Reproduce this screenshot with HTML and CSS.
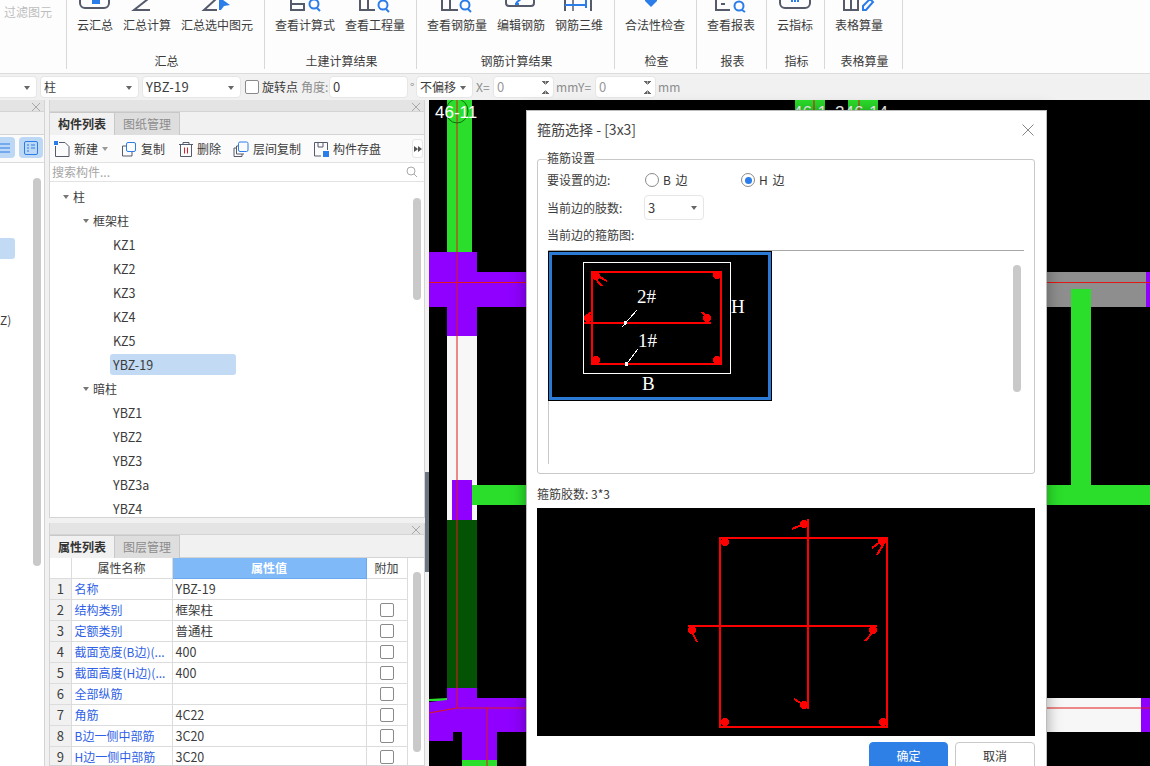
FILE: index.html
```html
<!DOCTYPE html>
<html lang="zh-CN">
<head>
<meta charset="utf-8">
<title>箍筋选择</title>
<link rel="stylesheet" href="styles.css">
</head>
<body>
<div class="app">
  <header class="ribbon">
    <div class="filter-cell">过滤图元</div>

    <section class="group g-sum">
      <div class="items">
        <div class="item">
          <svg class="ri" width="36" height="14" viewBox="77 0 36 14"><rect class="st" x="80" y="-12" width="29" height="20" rx="5"/><path class="bl" d="M92 1h8M92 3h8" /></svg>
          <span>云汇总</span>
        </div>
        <div class="item">
          <svg class="ri" width="48" height="14" viewBox="123 0 48 14"><path class="st" d="M148 -1 134 10H150"/></svg>
          <span>汇总计算</span>
        </div>
        <div class="item">
          <svg class="ri" width="72" height="14" viewBox="181 0 72 14"><path class="st" d="M216 -1 204 10H217"/><path class="blf" d="M219 -3 230 5 224 6 221 10 219 10Z"/></svg>
          <span>汇总选中图元</span>
        </div>
      </div>
      <div class="glabel">汇总</div>
    </section>

    <section class="group g-civil">
      <div class="items">
        <div class="item">
          <svg class="ri" width="60" height="14" viewBox="275 0 60 14"><path class="st" d="M291 -2V10H304V4H291"/><circle class="bs" cx="314" cy="4" r="4.5"/><path class="bs" d="M317 8l3 3"/></svg>
          <span>查看计算式</span>
        </div>
        <div class="item">
          <svg class="ri" width="60" height="14" viewBox="345 0 60 14"><path class="st" d="M360 -2V10H375M368 -2V10"/><circle class="bs" cx="383" cy="5" r="4.5"/><path class="bs" d="M386 9l3 3"/></svg>
          <span>查看工程量</span>
        </div>
      </div>
      <div class="glabel">土建计算结果</div>
    </section>

    <section class="group g-steel">
      <div class="items">
        <div class="item">
          <svg class="ri" width="60" height="14" viewBox="427 0 60 14"><path class="st" d="M442 -2V10H458M450 -2V10"/><circle class="bs" cx="465" cy="5" r="4.5"/><path class="bs" d="M468 9l3 3"/></svg>
          <span>查看钢筋量</span>
        </div>
        <div class="item">
          <svg class="ri" width="48" height="14" viewBox="497 0 48 14"><path class="st" d="M506 0V3Q506 6 509 6H531Q534 6 534 3V0"/><path class="bs" d="M516 3 522 -2M515 4h4"/></svg>
          <span>编辑钢筋</span>
        </div>
        <div class="item">
          <svg class="ri" width="48" height="14" viewBox="555 0 48 14"><path class="st" d="M565 -2V11M591 -2V11"/><path class="st thin" d="M573 -2V11"/><path class="bs" d="M565 5H587M586 -1V8"/></svg>
          <span>钢筋三维</span>
        </div>
      </div>
      <div class="glabel">钢筋计算结果</div>
    </section>

    <section class="group g-check">
      <div class="items">
        <div class="item">
          <svg class="ri" width="60" height="14" viewBox="625 0 60 14"><path class="blf" d="M645 -2H657V1L651 7 645 1Z"/></svg>
          <span>合法性检查</span>
        </div>
      </div>
      <div class="glabel">检查</div>
    </section>

    <section class="group g-report">
      <div class="items">
        <div class="item">
          <svg class="ri" width="48" height="14" viewBox="707 0 48 14"><path class="st" d="M716 -2V10H730M721 4h4"/><circle class="bs" cx="739" cy="6" r="4.5"/><path class="bs" d="M742 10l3 2"/></svg>
          <span>查看报表</span>
        </div>
      </div>
      <div class="glabel">报表</div>
    </section>

    <section class="group g-index">
      <div class="items">
        <div class="item">
          <svg class="ri" width="36" height="14" viewBox="777 0 36 14"><rect class="st" x="780" y="-12" width="30" height="20" rx="5"/><path class="bs" d="M792 0v2M795 0v2M798 0v2"/></svg>
          <span>云指标</span>
        </div>
      </div>
      <div class="glabel">指标</div>
    </section>

    <section class="group g-table">
      <div class="items">
        <div class="item">
          <svg class="ri" width="48" height="14" viewBox="835 0 48 14"><path class="st" d="M844 -2V10H858M851 -2V10H858V-2"/><path class="bs thin" d="M863 10V6L870 -1 873 2 866 10Z"/></svg>
          <span>表格算量</span>
        </div>
      </div>
      <div class="glabel">表格算量</div>
    </section>
  </header>

  <div class="toolbar">
    <div class="combo w-first"><i class="caret"></i></div>
    <div class="combo w-combo"><span>柱</span><i class="caret"></i></div>
    <div class="combo w-combo"><span class="latin">YBZ-19</span><i class="caret"></i></div>
    <span class="check tb-check"></span>
    <span class="tb-text">旋转点</span>
    <span class="tb-muted lab-angle">角度:</span>
    <div class="field w-angle"><span class="latin">0</span></div>
    <span class="tb-muted deg">°</span>
    <div class="combo w-offset"><span>不偏移</span><i class="caret"></i></div>
    <span class="tb-muted lab-xy">X=</span>
    <div class="field w-num"><span class="latin dim">0</span><i class="spin"></i></div>
    <span class="tb-muted lab-mm">mm</span>
    <span class="tb-muted lab-xy">Y=</span>
    <div class="field w-num"><span class="latin dim">0</span><i class="spin"></i></div>
    <span class="tb-muted lab-mm">mm</span>
  </div>

  <main class="main">
    <aside class="side">
      <div class="pane-narrow">
        <div class="pane-head"><svg class="x" width="8" height="8" viewBox="0 0 8 8"><path d="M0 0 8 8M8 0 0 8"/></svg></div>
        <div class="tabs"></div>
        <div class="narrow-tools">
          <span class="pill pill-a"><svg width="15" height="14" viewBox="0 0 15 14"><path class="bs1" d="M0 3H10M0 7H10M0 11H10"/></svg></span>
          <span class="pill pill-b"><svg width="16" height="16" viewBox="0 0 16 16"><rect class="bs1" x="1.500" y="1.500" width="13" height="13" rx="1.500"/><path class="bs1" d="M4 5H6M8 5H12M4 8H6M8 8H12M4 11H6"/></svg></span>
        </div>
        <div class="narrow-list">
          <div class="narrow-sel"></div>
          <div class="narrow-text">Z)</div>
          <div class="narrow-scroll"></div>
        </div>
      </div>

      <div class="pane-stack">
        <section class="pane pane-top">
          <div class="pane-head"><svg class="x" width="8" height="8" viewBox="0 0 8 8"><path d="M0 0 8 8M8 0 0 8"/></svg></div>
          <div class="tabs">
            <span class="tab active">构件列表</span>
            <span class="tab">图纸管理</span>
          </div>
          <div class="comp-tools">
            <span class="tool t-new"><svg width="16" height="16" viewBox="0 0 16 16"><path class="ds" d="M5 1.500H11L15 5.500V15.500H1.500V5"/><rect class="blf" x="0" y="0" width="4" height="4"/></svg>新建<i class="caret small"></i></span>
            <span class="tool t-copy"><svg width="16" height="16" viewBox="0 0 16 16"><path class="ds" d="M5 5H1.500V15H11V11"/><rect class="bs1" x="5.500" y="1.500" width="9" height="9" rx="1.500"/></svg>复制</span>
            <span class="tool t-del"><svg width="16" height="16" viewBox="0 0 16 16"><path class="ds" d="M1 3.500H15M5 3.500V1.500H11V3.500M2.500 3.500V15.500H13.500V3.500"/><path class="rs" d="M6.500 6.500V12.500M9.500 6.500V12.500"/></svg>删除</span>
            <span class="tool t-floor"><svg width="16" height="16" viewBox="0 0 16 16"><path class="ds" d="M5 5H3.500V13H11M3 7H1V15.500H9V13"/><rect class="bs1" x="5.500" y="1" width="9.500" height="9.500" rx="1.500"/></svg>层间复制</span>
            <span class="tool t-save"><svg width="16" height="16" viewBox="0 0 16 16"><path class="ds" d="M1.500 1.500H14.500V9M8 15H1.500V1.500M5 1.500V6H10V1.500"/><rect class="blf" x="10" y="10" width="6" height="6"/></svg>构件存盘</span>
            <span class="more"><svg width="8" height="6" viewBox="0 0 8 6"><path d="M0 0 4 3 0 6ZM4 0 8 3 4 6Z"/></svg></span>
          </div>
          <div class="search">
            <span>搜索构件...</span>
            <svg width="12" height="12" viewBox="0 0 12 12"><circle cx="5" cy="5" r="4"/><path d="M8 8l3 3"/></svg>
          </div>
          <div class="tree">
            <div class="node n0"><i class="caret tree-caret"></i>柱</div>
            <div class="node n1"><i class="caret tree-caret"></i>框架柱</div>
            <div class="node n2">KZ1</div>
            <div class="node n2">KZ2</div>
            <div class="node n2">KZ3</div>
            <div class="node n2">KZ4</div>
            <div class="node n2">KZ5</div>
            <div class="node n2 selected"><span>YBZ-19</span></div>
            <div class="node n1"><i class="caret tree-caret"></i>暗柱</div>
            <div class="node n2">YBZ1</div>
            <div class="node n2">YBZ2</div>
            <div class="node n2">YBZ3</div>
            <div class="node n2">YBZ3a</div>
            <div class="node n2">YBZ4</div>
            <div class="tree-scroll"></div>
          </div>
        </section>

        <section class="pane pane-bottom">
          <div class="pane-head"><svg class="x" width="8" height="8" viewBox="0 0 8 8"><path d="M0 0 8 8M8 0 0 8"/></svg></div>
          <div class="tabs">
            <span class="tab active">属性列表</span>
            <span class="tab">图层管理</span>
          </div>
          <div class="table-wrap">
            <table class="props">
              <colgroup><col class="c-num"><col class="c-name"><col class="c-val"><col class="c-add"></colgroup>
              <thead>
                <tr><th class="corner"></th><th>属性名称</th><th class="val-head">属性值</th><th>附加</th></tr>
              </thead>
              <tbody>
                <tr><td class="num">1</td><td class="name">名称</td><td class="val">YBZ-19</td><td></td></tr>
                <tr><td class="num">2</td><td class="name">结构类别</td><td class="val">框架柱</td><td class="add"><span class="check"></span></td></tr>
                <tr><td class="num">3</td><td class="name">定额类别</td><td class="val">普通柱</td><td class="add"><span class="check"></span></td></tr>
                <tr><td class="num">4</td><td class="name">截面宽度(B边)(...</td><td class="val">400</td><td class="add"><span class="check"></span></td></tr>
                <tr><td class="num">5</td><td class="name">截面高度(H边)(...</td><td class="val">400</td><td class="add"><span class="check"></span></td></tr>
                <tr><td class="num">6</td><td class="name">全部纵筋</td><td class="val"></td><td class="add"><span class="check"></span></td></tr>
                <tr><td class="num">7</td><td class="name">角筋</td><td class="val">4C22</td><td class="add"><span class="check"></span></td></tr>
                <tr><td class="num">8</td><td class="name">B边一侧中部筋</td><td class="val">3C20</td><td class="add"><span class="check"></span></td></tr>
                <tr><td class="num">9</td><td class="name">H边一侧中部筋</td><td class="val">3C20</td><td class="add"><span class="check"></span></td></tr>
              </tbody>
            </table>
            <div class="table-scroll"></div>
          </div>
        </section>
      </div>

      <div class="splitter"><div class="split-grip"></div></div>
    </aside>

    <div class="canvas">
      <svg class="cad" width="721" height="666" viewBox="429 100 721 666">
        <rect x="429" y="100" width="721" height="666" fill="#000"/>
        <!-- top labels behind dialog -->
        <rect x="795" y="100" width="30" height="14" fill="#2bde2b"/>
        <rect x="848" y="100" width="30" height="14" fill="#2bde2b"/>
        <path d="M814 100V114M859 100V114" stroke="#e01818" stroke-width="1"/>
        <text class="axis" x="793" y="118">46-1</text>
        <text class="axis" x="835" y="118">246-14</text>
        <!-- left column -->
        <rect x="447" y="100" width="25" height="152" fill="#2bde2b"/>
        <rect x="429" y="252" width="48" height="55" fill="#8f00ff"/>
        <rect x="477" y="272" width="50" height="35" fill="#8f00ff"/>
        <rect x="447" y="307" width="30" height="29" fill="#8f00ff"/>
        <rect x="447" y="336" width="30" height="184" fill="#f7f7f7"/>
        <rect x="452" y="480" width="20" height="40" fill="#8f00ff"/>
        <rect x="472" y="485" width="55" height="20" fill="#2bde2b"/>
        <rect x="447" y="520" width="30" height="169" fill="#045204"/>
        <path d="M429 699 447 698V701H429Z" fill="#2bde2b"/>
        <path d="M447 688H477V698H527V732H497V760H462V732H453V741H429V702L447 700Z" fill="#8f00ff"/>
        <rect x="462" y="760" width="35" height="6" fill="#2bde2b"/>
        <path d="M457 100V708M429 282.500H527M457 708H527M429 713 457 708M487 708V766" stroke="#e01818" stroke-width="1" fill="none"/>
        <ellipse cx="457" cy="111" rx="11" ry="12" fill="none" stroke="#0a6e0a"/>
        <text class="axis" x="435" y="118">46-11</text>
        <!-- right side -->
        <rect x="1047" y="272" width="99" height="35" fill="#8e8e8e"/>
        <rect x="1146" y="272" width="4" height="35" fill="#8f00ff"/>
        <path d="M1047 282.500H1150" stroke="#e01818"/>
        <rect x="1071" y="289" width="20" height="196" fill="#2bde2b"/>
        <rect x="1047" y="485" width="103" height="20" fill="#2bde2b"/>
        <rect x="1047" y="698" width="94" height="34" fill="#f7f7f7"/>
        <rect x="1141" y="698" width="9" height="34" fill="#8f00ff"/>
        <path d="M1047 708H1150" stroke="#e01818"/>
      </svg>
    </div>
  </main>

  <div class="dialog">
    <div class="dlg-title">
      <span>箍筋选择 - [3x3]</span>
      <svg class="dlg-x" width="12" height="12" viewBox="0 0 12 12"><path d="M.5.5l11 11M11.500.5l-11 11"/></svg>
    </div>
    <fieldset class="settings">
      <legend>箍筋设置</legend>
      <div class="row r-side">
        <span class="row-label">要设置的边:</span>
        <span class="radio-opt"><i class="radio"></i>B 边</span>
        <span class="radio-opt"><i class="radio on"></i>H 边</span>
      </div>
      <div class="row r-count">
        <span class="row-label">当前边的肢数:</span>
        <div class="combo w-count"><span class="latin">3</span><i class="caret"></i></div>
      </div>
      <div class="row r-fig"><span>当前边的箍筋图:</span></div>
      <div class="thumb-list">
        <svg class="thumb" width="224" height="150" viewBox="548 251 224 150">
          <rect x="548" y="251" width="224" height="150" fill="#000"/>
          <rect x="550.500" y="253.500" width="219" height="145" fill="none" stroke="#2b7ad6" stroke-width="3"/>
          <rect x="583.500" y="262.500" width="147" height="111" fill="none" stroke="#fff"/>
          <rect x="592" y="272" width="129" height="92" fill="none" stroke="#f00" stroke-width="2"/>
          <path d="M584 322.700H711" stroke="#f00" stroke-width="2"/>
          <g fill="#f00">
            <circle cx="596" cy="276" r="4"/><circle cx="717" cy="275" r="4"/>
            <circle cx="596" cy="360" r="4"/><circle cx="717" cy="360" r="4"/>
            <circle cx="588" cy="318" r="4"/><circle cx="707" cy="318" r="4"/>
          </g>
          <path d="M594 274 607 281M593 276 602 286M588 318 590 312M707 318 702 312" stroke="#f00" stroke-width="2" fill="none"/>
          <path d="M637 310 622 327M638 349 625 366" stroke="#fff"/>
          <circle cx="625.500" cy="322.700" r="2" fill="#fff"/>
          <circle cx="626.500" cy="364" r="2" fill="#fff"/>
          <text class="fig" x="637" y="303">2#</text>
          <text class="fig" x="638" y="347">1#</text>
          <text class="fig" x="731" y="313">H</text>
          <text class="fig" x="642" y="390">B</text>
        </svg>
        <div class="thumb-scroll"></div>
      </div>
    </fieldset>
    <div class="legs">箍筋胶数: 3*3</div>
    <div class="preview">
      <svg width="498" height="228" viewBox="537 508 498 228">
        <rect x="720" y="538" width="167" height="189" fill="none" stroke="#f00" stroke-width="2"/>
        <path d="M688 626H877M808 519V709" stroke="#f00" stroke-width="2" fill="none"/>
        <g fill="#f00">
          <circle cx="725" cy="542" r="4"/><circle cx="882" cy="541" r="4"/>
          <circle cx="725" cy="722" r="4"/><circle cx="883" cy="722" r="4"/>
          <circle cx="692" cy="630" r="4"/><circle cx="873" cy="630" r="4"/>
          <circle cx="804" cy="524" r="4"/><circle cx="804" cy="705" r="4"/>
        </g>
        <path d="M804 524 792 529M883 540 872 548M884 543 877 555M692 632 697 642M873 632 865 641M804 705 794 699" stroke="#f00" stroke-width="2" fill="none"/>
      </svg>
    </div>
    <div class="buttons">
      <button class="btn primary">确定</button>
      <button class="btn">取消</button>
    </div>
  </div>
</div>
</body>
</html>
```
FILE: styles.css
```css
* { box-sizing: border-box; }
html, body { margin: 0; padding: 0; height: 100%; }
body {
  font: 12px/16px "Noto Sans CJK SC", "Noto Sans", sans-serif;
  color: #3c3c3c;
  background: #fff;
  overflow: hidden;
}
.app {
  position: relative;
  width: 1150px;
  height: 766px;
  overflow: hidden;
  display: flex;
  flex-direction: column;
}

/* ribbon */
.ribbon { height: 73px; display: flex; background: #fdfdfd; flex: none; }
.filter-cell { width: 67px; height: 69px; padding: 4px 0 0 4px; color: #bdbdbd; border-right: 1px solid #d8d8d8; }
.group {
  height: 69px;
  display: flex;
  flex-direction: column;
  justify-content: space-between;
  border-right: 1px solid #d8d8d8;
}
.items { display: flex; gap: 10px; padding-left: 10px; }
.item { display: flex; flex-direction: column; }
.item span { margin-top: 3px; white-space: nowrap; }
.ri { display: block; overflow: hidden; }
.glabel { text-align: center; padding-left: 2px; }
.g-sum { width: 198px; }
.g-civil { width: 152px; }
.g-steel { width: 198px; }
.g-check { width: 82px; }
.g-report { width: 70px; }
.g-index { width: 58px; }
.g-table { width: 78px; }
.st { fill: none; stroke: #555b6b; stroke-width: 2; }
.thin { stroke-width: 1.500; }
.bl, .bs { fill: none; stroke: #2b7de9; stroke-width: 2; }
.blf { fill: #2b7de9; }
.bs1 { fill: none; stroke: #2b7de9; stroke-width: 1; }
.ds { fill: none; stroke: #555b6b; stroke-width: 1; }
.rs { fill: none; stroke: #d8202a; stroke-width: 1; }

/* top options bar */
.toolbar {
  height: 27px;
  flex: none;
  display: flex;
  align-items: center;
  gap: 3px;
  background: #f1f1f1;
  border-top: 1px solid #dcdcdc;
}
.combo, .field {
  height: 22px;
  display: flex;
  align-items: center;
  background: #fff;
  border: 1px solid #e6e6e6;
  border-radius: 4px;
  padding: 0 3px;
  flex: none;
  position: relative;
}
.w-first { width: 37px; border-left: 0; border-radius: 0 4px 4px 0; }
.w-combo { width: 99px; }
.w-angle { width: 79px; }
.w-offset { width: 57px; }
.w-num { width: 61px; }
.latin { font-size: 13px; letter-spacing: .2px; }
.dim { color: #999; }
.caret {
  position: absolute;
  right: 6px;
  top: 9px;
  width: 0;
  height: 0;
  border: 3.500px solid transparent;
  border-top: 4px solid #666;
  border-bottom: 0;
}
.spin {
  position: absolute;
  right: 4px;
  top: 4px;
  width: 7px;
  height: 13px;
  background:
    linear-gradient(to top right, transparent 50%, #666 50%) 0 0 / 50% 4px no-repeat,
    linear-gradient(to top left, transparent 50%, #666 50%) 100% 0 / 50% 4px no-repeat,
    linear-gradient(to bottom right, transparent 50%, #666 50%) 0 100% / 50% 4px no-repeat,
    linear-gradient(to bottom left, transparent 50%, #666 50%) 100% 100% / 50% 4px no-repeat;
}
.check {
  display: inline-block;
  width: 14px;
  height: 14px;
  background: #fff;
  border: 1px solid #8a8a8a;
  border-radius: 2px;
  flex: none;
}
.tb-check { margin-left: 1px; }
.tb-muted { color: #8c8c8c; white-space: nowrap; }
.tb-text { white-space: nowrap; }
.lab-angle { width: 26px; margin-right: -1px; overflow: visible; }
.deg { width: 5px; margin-left: -1px; margin-right: -2px; }
.lab-xy { width: 14px; }
.lab-mm { width: 19px; margin-left: -1px; }

/* main */
.main { flex: 1; display: flex; min-height: 0; }
.side { width: 429px; flex: none; display: flex; background: #f1f1f1; }
.pane-narrow { width: 45px; flex: none; display: flex; flex-direction: column; border-right: 1px solid #d4d4d4; background: #fff; }
.pane-head {
  height: 12px;
  flex: none;
  background: #e4e4e4;
  border-bottom: 1px solid #d4d4d4;
  display: flex;
  justify-content: flex-end;
  padding: 3px 4px 0 0;
}
.x { stroke: #a8a8a8; stroke-width: 1; fill: none; display: block; }
.tabs { height: 23px; flex: none; background: #f1f1f1; border-bottom: 1px solid #d4d4d4; display: flex; padding-left: 0; }
.tab {
  width: 65px;
  height: 23px;
  line-height: 21px;
  text-align: center;
  font-size: 12px;
  color: #8c8c8c;
  background: #dedede;
  border: 1px solid #c8c8c8;
  border-bottom: 0;
  border-left: 0;
}
.tab.active { color: #333; background: #f1f1f1; font-weight: 700; }
.narrow-tools { height: 28px; flex: none; display: flex; gap: 4px; padding-top: 2px; border-bottom: 1px solid #dcdcdc; background: #fbfbfb; }
.pill { height: 21px; border-radius: 4px; background: #bcd8f5; display: flex; align-items: center; }
.pill-a { width: 15px; border-radius: 0 4px 4px 0; }
.pill-b { width: 24px; justify-content: center; }
.narrow-list { flex: 1; position: relative; }
.narrow-sel { width: 15px; height: 21px; margin-top: 75px; background: #c2daf3; border-radius: 0 3px 3px 0; }
.narrow-text { margin-top: 53px; }
.narrow-scroll { position: absolute; left: 33px; top: 15px; width: 8px; height: 388px; background: #c9c9c9; border-radius: 4px; }

.pane-stack { width: 376px; margin-left: 4px; flex: none; display: flex; flex-direction: column; gap: 5px; }
.pane { background: #fff; border: solid #d4d4d4; border-width: 0 1px 1px; display: flex; flex-direction: column; }
.pane-top { height: 418px; flex: none; }
.pane-bottom { flex: 1; min-height: 0; }

.comp-tools {
  height: 28px;
  flex: none;
  display: flex;
  align-items: center;
  position: relative;
  background: #fbfbfb;
  border-bottom: 1px solid #e2e2e2;
  padding-left: 4px;
}
.tool { display: flex; align-items: center; gap: 4px; white-space: nowrap; position: relative; }
.tool svg { flex: none; }
.t-new { width: 67px; }
.t-copy { width: 57px; }
.t-del { width: 55px; }
.t-del svg { margin-right: -1px; }
.t-floor { width: 80px; }
.caret.small { right: 13px; top: 6px; border-top-color: #999; }
.more {
  position: absolute;
  left: 362px;
  top: 4px;
  width: 11px;
  height: 19px;
  display: flex;
  align-items: center;
  justify-content: center;
  fill: #555;
  background: #fff;
  border: 1px solid #e6e6e6;
  border-radius: 3px;
}
.search {
  height: 19px;
  flex: none;
  display: flex;
  align-items: center;
  justify-content: space-between;
  padding: 0 6px 0 2px;
  color: #a6a6a6;
  border-bottom: 1px solid #e2e2e2;
}
.search svg { fill: none; stroke: #a8a8a8; stroke-width: 1; }
.tree { flex: 1; position: relative; padding-top: 3px; overflow: hidden; font-size: 12px; }
.node { height: 24px; line-height: 24px; position: relative; white-space: nowrap; }
.n0 { padding-left: 23px; }
.n1 { padding-left: 43px; }
.n2 { padding-left: 63px; font-size: 12.500px; }
.tree-caret { left: 13px; right: auto; top: 10px; border-top-color: #777; }
.n1 .tree-caret { left: 33px; }
.selected { padding-left: 60px; }
.selected span { display: block; width: 126px; height: 21px; line-height: 21px; margin-top: 0; padding-left: 3px; position: relative; top: 1px; background: #c2daf3; border-radius: 3px; }
.tree-scroll { position: absolute; left: 363px; top: 16px; width: 8px; height: 102px; background: #c9c9c9; border-radius: 4px; }

.table-wrap { flex: 1; position: relative; overflow: hidden; }
.props { border-collapse: collapse; table-layout: fixed; width: 357px; }
.c-num { width: 21px; }
.c-name { width: 101px; }
.c-val { width: 194px; }
.c-add { width: 41px; }
.props th, .props td {
  height: 21px;
  padding: 0;
  border: 1px solid #dcdcdc;
  font-weight: 400;
  white-space: nowrap;
  overflow: hidden;
}
.props th { height: 20px; text-align: center; border-top: 0; background: #fff; }
.props tr > :first-child { border-left: 0; }
.props .val-head { background: #7fb9f8; color: #fff; font-weight: 700; border-color: #6aa9ee; }
.props .num { background: #f1f1f1; text-align: center; font-size: 13px; }
.props .name { color: #2f5fe6; padding-left: 3px; }
.props .val { padding-left: 3px; font-size: 12.500px; }
.props .add { text-align: center; line-height: 0; }
.table-scroll { position: absolute; left: 363px; top: 14px; width: 8px; height: 180px; background: #c9c9c9; border-radius: 4px; }

.splitter { width: 4px; flex: none; }
.split-grip { width: 4px; height: 100px; margin-top: 372px; background: #6c7680; }

/* canvas */
.canvas { flex: 1; overflow: hidden; background: #000; }
.cad { display: block; }
.axis { font: 17px "Liberation Sans", sans-serif; fill: #fff; }

/* dialog */
.dialog {
  position: absolute;
  left: 526px;
  top: 110px;
  width: 521px;
  height: 680px;
  padding: 0 11px 0 10px;
  background: #fff;
  border: 1px solid #bdbdbd;
  box-shadow: 0 0 14px rgba(0, 0, 0, .35);
}
.dlg-title { height: 39px; padding-top: 10px; display: flex; justify-content: space-between; font-size: 14px; color: #444; }
.dlg-x { margin: 3px 1px 0 0; stroke: #888; fill: none; stroke-width: 1; }
.settings {
  height: 324px;
  margin: 0;
  padding: 4px 10px 0 9px;
  border: 1px solid #c8c8c8;
  border-radius: 3px;
  min-width: 0;
}
.settings legend { padding: 0 0 2px; margin-left: 0; line-height: 16px; }
.row { display: flex; align-items: center; }
.row-label { width: 97px; flex: none; }
.r-side { height: 16px; }
.r-count { height: 25px; margin-top: 7px; }
.r-fig { height: 16px; margin-top: 7px; }
.radio-opt { display: flex; align-items: center; gap: 4px; width: 96px; white-space: nowrap; color: #333; word-spacing: 2px; }
.radio {
  width: 14px;
  height: 14px;
  border: 1px solid #8a8a8a;
  border-radius: 50%;
  display: flex;
  align-items: center;
  justify-content: center;
  margin-left: 1px;
  background: #fff;
}
.radio.on::after { content: ""; width: 7px; height: 7px; border-radius: 50%; background: #2b7de9; }
.w-count { width: 60px; height: 25px; padding-left: 3px; }
.w-count .caret { top: 10px; }
.thumb-list { height: 214px; margin: 7px 0 0 1px; display: flex; border-top: 1px solid #a8a8a8; border-left: 1px solid #c8c8c8; }
.thumb { display: block; flex: none; margin-left: -1px; shape-rendering: crispEdges; }
.fig { font: 19px "Liberation Serif", serif; fill: #fff; }
.thumb text { shape-rendering: auto; }
.thumb-scroll { width: 8px; height: 127px; margin: 14px 3px 0 auto; background: #c9c9c9; border-radius: 4px; }
.legs { margin-top: 12px; height: 16px; }
.preview { margin-top: 6px; height: 228px; background: #000; }
.preview svg { display: block; shape-rendering: crispEdges; }
.buttons { margin-top: 6px; display: flex; justify-content: flex-end; gap: 7px; }
.btn {
  width: 80px;
  height: 28px;
  padding: 0;
  font: inherit;
  color: #333;
  background: #fff;
  border: 1px solid #c8c8c8;
  border-radius: 4px;
}
.btn.primary { width: 79px; color: #fff; background: #2f80e6; border-color: #2f80e6; }
```
